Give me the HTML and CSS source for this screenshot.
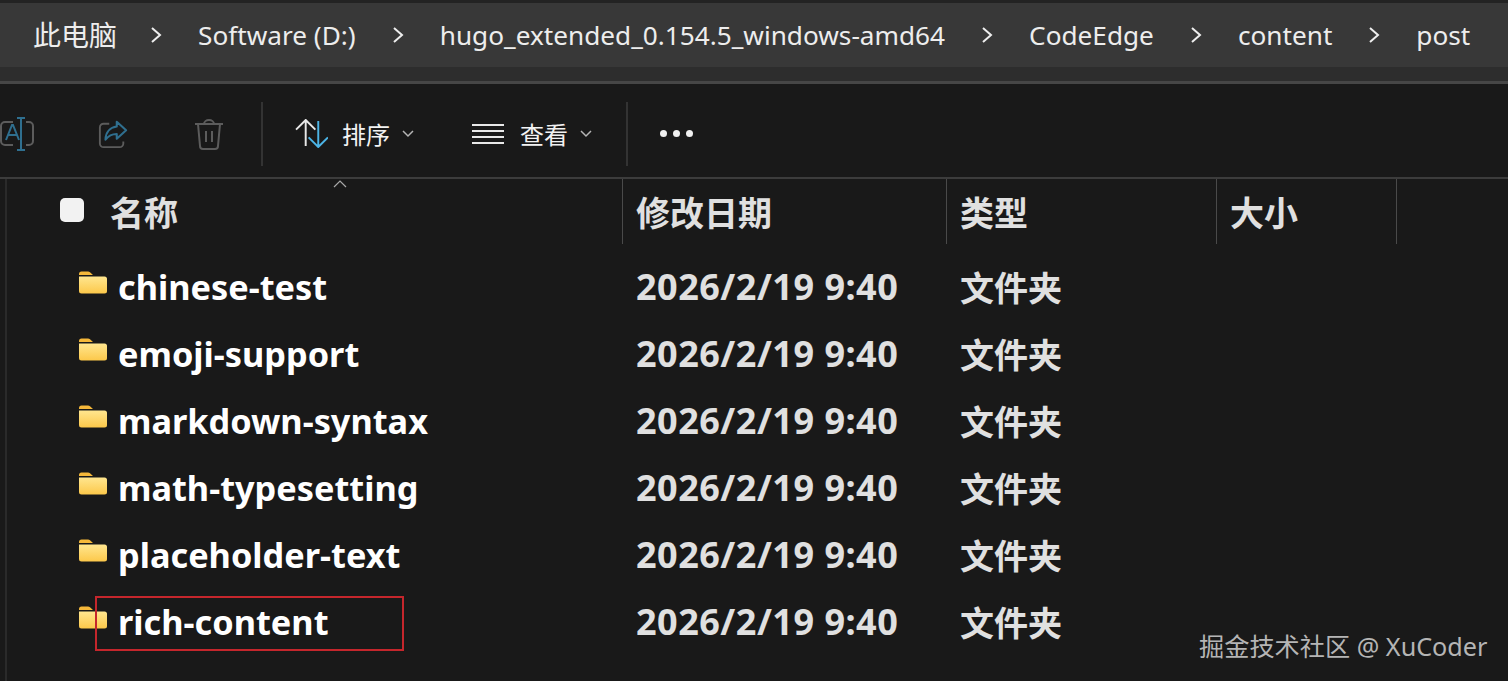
FILE: index.html
```html
<!DOCTYPE html>
<html lang="zh-CN">
<head>
    <meta charset="UTF-8">
    <title>post</title>
    <link rel="stylesheet" href="styles.css">
</head>
<body>
<svg class="defs" width="0" height="0">
    <defs>
        <linearGradient id="folderFront" x1="0" y1="0" x2="0" y2="1">
            <stop offset="0" stop-color="#ffe68f"/>
            <stop offset="1" stop-color="#fcc84a"/>
        </linearGradient>
        <symbol id="folder" viewBox="0 0 28 23">
            <path d="M0 3a2.500 2.500 0 0 1 2.500-2.500h6.500a3 3 0 0 1 2 .8l3 2.700h-14z" fill="#f5b83a"/>
            <path d="M0 5.500h25.500a2.500 2.500 0 0 1 2.500 2.500v12a2.500 2.500 0 0 1-2.500 2.500h-23a2.500 2.500 0 0 1-2.500-2.500z" fill="url(#folderFront)"/>
        </symbol>
    </defs>
</svg>

<div class="addressBar">
    <div class="crumbs">
        <span class="crumb crumbFirst">此电脑</span>
        <svg class="sep sepFirst" viewBox="0 0 12 18"><path d="M2 2l8 7-8 7"/></svg>
        <span class="crumb">Software (D:)</span>
        <svg class="sep" viewBox="0 0 12 18"><path d="M2 2l8 7-8 7"/></svg>
        <span class="crumb">hugo_extended_0.154.5_windows-amd64</span>
        <svg class="sep" viewBox="0 0 12 18"><path d="M2 2l8 7-8 7"/></svg>
        <span class="crumb">CodeEdge</span>
        <svg class="sep" viewBox="0 0 12 18"><path d="M2 2l8 7-8 7"/></svg>
        <span class="crumb">content</span>
        <svg class="sep" viewBox="0 0 12 18"><path d="M2 2l8 7-8 7"/></svg>
        <span class="crumb">post</span>
    </div>
</div>

<div class="toolbar">
    <svg class="tbIcon iconRename" viewBox="0 0 34 34" fill="none">
        <path d="M13 5H5a4 4 0 0 0-4 4v15a4 4 0 0 0 4 4h8M26 5h3a4 4 0 0 1 4 4v15a4 4 0 0 1-4 4h-3" stroke="#5c5c5c" stroke-width="2"/>
        <path d="M6 23l6-15h1l6 15M8 18h9" stroke="#2f6f8f" stroke-width="2"/>
        <path d="M17 1h8M21 1v32M17 33h8" stroke="#2f6f8f" stroke-width="2"/>
    </svg>
    <svg class="tbIcon iconShare" viewBox="0 0 32 32" fill="none">
        <path d="M12 5H6a4 4 0 0 0-4 4v17a4 4 0 0 0 4 4h17a4 4 0 0 0 4-4v-2" stroke="#5c5c5c" stroke-width="2"/>
        <path d="M20 3l10 9-10 9v-5c-6 0-9 2-12 6 0-8 5-13 12-14z" stroke="#2f6f8f" stroke-width="2.200" stroke-linejoin="round"/>
    </svg>
    <svg class="tbIcon iconTrash" viewBox="0 0 30 32" fill="none" stroke="#5c5c5c" stroke-width="2">
        <path d="M1 6h28M10 6a5 4 0 0 1 10 0M4 6l2 22a3 3 0 0 0 3 3h12a3 3 0 0 0 3-3l2-22M12 13v11M18 13v11"/>
    </svg>
    <span class="tbDivider"></span>
    <div class="tbBtn btnSort">
        <svg class="iconSort" viewBox="0 0 34 30" fill="none" stroke-width="2">
            <path d="M1 11l10-10 10 10M11 1v27" stroke="#e8e8e8"/>
            <path d="M14 19l10 10 10-10M24 29V2" stroke="#4cb4e6"/>
        </svg>
        <span>排序</span>
        <svg class="chev" viewBox="0 0 12 8"><path d="M1 1l5 5 5-5"/></svg>
    </div>
    <div class="tbBtn btnView">
        <svg class="iconView" viewBox="0 0 32 20" stroke="#e8e8e8" stroke-width="2"><path d="M0 1h32M0 7h32M0 13h32M0 19h32"/></svg>
        <span>查看</span>
        <svg class="chev" viewBox="0 0 12 8"><path d="M1 1l5 5 5-5"/></svg>
    </div>
    <span class="tbDivider dividerRight"></span>
    <div class="more"><i></i><i></i><i></i></div>
</div>

<div class="fileList">
    <svg class="sortCaret" viewBox="0 0 14 8"><path d="M1 7l6-6 6 6"/></svg>
    <div class="headRow">
        <div class="headCell headName"><span class="checkBox"></span>名称</div>
        <div class="headCell">修改日期</div>
        <div class="headCell">类型</div>
        <div class="headCell">大小</div>
    </div>
    <div class="row">
        <div class="cellName"><svg class="folder"><use href="#folder"/></svg>chinese-test</div>
        <div class="cell cellDate">2026/2/19 9:40</div>
        <div class="cell">文件夹</div>
    </div>
    <div class="row">
        <div class="cellName"><svg class="folder"><use href="#folder"/></svg>emoji-support</div>
        <div class="cell cellDate">2026/2/19 9:40</div>
        <div class="cell">文件夹</div>
    </div>
    <div class="row">
        <div class="cellName"><svg class="folder"><use href="#folder"/></svg>markdown-syntax</div>
        <div class="cell cellDate">2026/2/19 9:40</div>
        <div class="cell">文件夹</div>
    </div>
    <div class="row">
        <div class="cellName"><svg class="folder"><use href="#folder"/></svg>math-typesetting</div>
        <div class="cell cellDate">2026/2/19 9:40</div>
        <div class="cell">文件夹</div>
    </div>
    <div class="row">
        <div class="cellName"><svg class="folder"><use href="#folder"/></svg>placeholder-text</div>
        <div class="cell cellDate">2026/2/19 9:40</div>
        <div class="cell">文件夹</div>
    </div>
    <div class="row">
        <div class="cellName"><svg class="folder"><use href="#folder"/></svg>rich-content</div>
        <div class="cell cellDate">2026/2/19 9:40</div>
        <div class="cell">文件夹</div>
    </div>
</div>

<div class="redBox"></div>
<div class="watermark">掘金技术社区 @ XuCoder</div>
</body>
</html>
```

FILE: styles.css
```css
html,body{
    margin: 0;
    height: 100%;
    overflow: hidden;
}
body{
    position: relative;
    background-color: #191919;
    color: #f0f0f0;
    font-family: "Noto Sans","Noto Sans CJK SC",sans-serif;
}
.defs{
    position: absolute;
}
.addressBar{
    height: 64px;
    padding-bottom: 14px;
    background-color: #2d2d2d;
    border-top: 3px solid #232323;
    border-bottom: 3px solid #464646;
}
.crumbs{
    height: 64px;
    display: flex;
    align-items: center;
    background-color: #383838;
    padding-left: 33px;
    white-space: nowrap;
}
.crumb{
    font-size: 26.2px;
    line-height: 64px;
    color: #ededed;
}
.crumbFirst{
    font-size: 28px;
}
.sep{
    width: 12px;
    height: 18px;
    margin: 0 36px;
    fill: none;
    stroke: #eeeeee;
    stroke-width: 2;
}
.sepFirst{
    margin-left: 33px;
}
.toolbar{
    height: 95px;
    box-sizing: border-box;
    padding-top: 6px;
    display: flex;
    align-items: center;
    border-bottom: 2px solid #3c3c3c;
}
.tbIcon{
    flex: none;
}
.iconRename{
    width: 34px;
    height: 34px;
}
.iconShare{
    width: 30px;
    height: 30px;
    margin-left: 64px;
}
.iconTrash{
    width: 30px;
    height: 32px;
    margin-left: 66px;
}
.tbDivider{
    width: 2px;
    height: 64px;
    background-color: #333333;
    margin-left: 37px;
}
.dividerRight{
    margin-left: 34px;
}
.tbBtn{
    display: flex;
    align-items: center;
    font-size: 24px;
    color: #f2f2f2;
}
.btnSort{
    margin-left: 32px;
}
.btnView{
    margin-left: 58px;
}
.iconSort{
    width: 33px;
    height: 29px;
    margin-right: 14px;
}
.iconView{
    width: 32px;
    height: 20px;
    margin-right: 16px;
}
.chev{
    width: 12px;
    height: 8px;
    margin-left: 12px;
    fill: none;
    stroke: #b5b5b5;
    stroke-width: 1.500;
}
.more{
    display: flex;
    gap: 6px;
    margin-left: 32px;
}
.more i{
    width: 7px;
    height: 7px;
    border-radius: 50%;
    background-color: #f0f0f0;
}
.fileList{
    position: relative;
    border-left: 2px solid #2a2a2a;
    margin-left: 5px;
    height: 503px;
}
.sortCaret{
    position: absolute;
    left: 326px;
    top: 1px;
    width: 14px;
    height: 8px;
    fill: none;
    stroke: #a8a8a8;
    stroke-width: 1.200;
}
.headRow,.row{
    display: grid;
    grid-template-columns: 616px 324px 270px 180px;
}
.headRow{
    height: 65px;
    margin-bottom: 9px;
}
.headCell{
    border-right: 1px solid #4a4a4a;
    display: flex;
    align-items: center;
    font-size: 34px;
    font-weight: 700;
    color: #e0e0e0;
    padding-left: 13px;
}
.headName{
    padding-left: 53px;
}
.checkBox{
    width: 24px;
    height: 24px;
    border-radius: 5px;
    background-color: #f2f2f2;
    margin-right: 26px;
    margin-bottom: 4px;
}
.row{
    height: 67px;
    align-items: center;
}
.cellName{
    display: flex;
    align-items: center;
    padding-left: 72px;
    font-size: 34.300px;
    font-weight: 700;
    color: #ffffff;
}
.folder{
    width: 28px;
    height: 23px;
    margin-right: 11px;
    margin-top: -8px;
}
.cell{
    padding-left: 13px;
    font-size: 34px;
    font-weight: 700;
    color: #e0e0e0;
}
.cellDate{
    font-size: 36px;
    letter-spacing: .5px;
}
.redBox{
    position: absolute;
    left: 95px;
    top: 596px;
    width: 309px;
    height: 55px;
    box-sizing: border-box;
    border: 2px solid #c5262c;
}
.watermark{
    position: absolute;
    left: 1199px;
    top: 628px;
    font-size: 25.200px;
    line-height: 36px;
    color: #b5b5b5;
}
```
